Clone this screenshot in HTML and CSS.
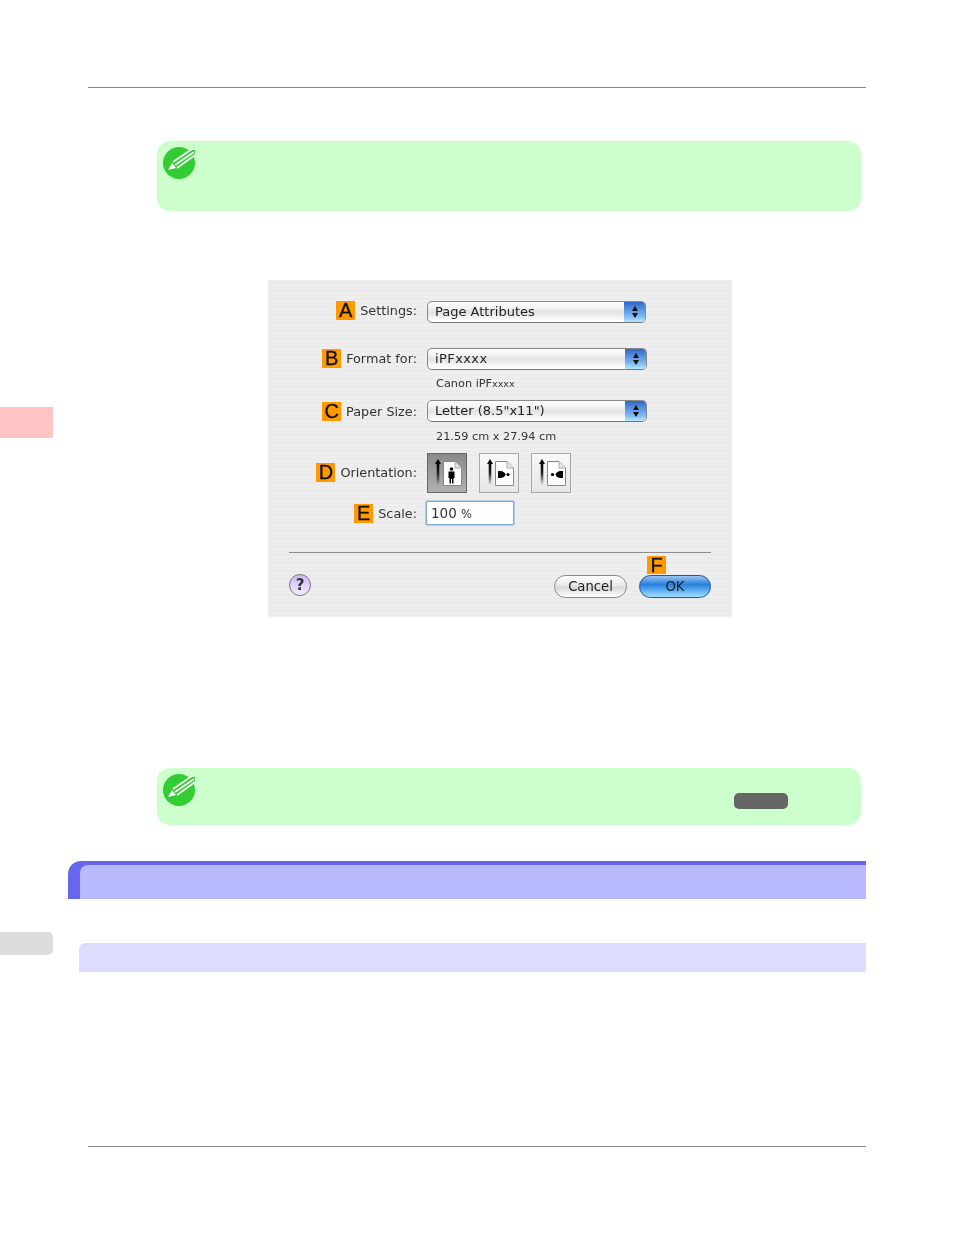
FILE: index.html
```html
<!DOCTYPE html>
<html>
<head>
<title>Page Attributes</title>
<link rel="stylesheet" href="styles.css">
</head>
<body>

<svg class="defs" width="0" height="0">
  <defs>
    <linearGradient id="arrowFade" x1="0" y1="0" x2="0" y2="1">
      <stop offset="0" stop-color="#000"/>
      <stop offset="0.45" stop-color="#222"/>
      <stop offset="1" stop-color="#000" stop-opacity="0"/>
    </linearGradient>
    <g id="sheet">
      <path d="M7 10 L10 5 L13 10 Z" fill="#000"/>
      <rect x="8.7" y="9" width="2.6" height="22" fill="url(#arrowFade)"/>
      <path d="M15.5 7.5 H27 L33.5 14 V31.5 H15.5 Z" fill="#fff" stroke="#888"/>
      <path d="M27 7.5 V14 H33.5" fill="#e4e4e4" stroke="#aaa"/>
    </g>
    <g id="pencil">
      <circle cx="17" cy="18" r="16" fill="#33cc33"/>
      <path d="M4 25 L9 17 L27 5 L33 5 L33 10 L13 25 Z" fill="#33cc33"/>
      <path d="M6 25 L10 18 L14 23 Z" fill="#fff"/>
      <path d="M11 17 L30 4 M13 20 L32 7 M15 23 L33 10" stroke="#fff" stroke-width="1.6" fill="none"/>
    </g>
  </defs>
</svg>

<div class="page">
  <div class="side">
    <div class="tab tab-pink"></div>
    <div class="tab tab-grey"></div>
  </div>

  <div class="main">
    <div class="rule"></div>

    <div class="note note-first">
      <svg class="note-icon" width="36" height="36" viewBox="0 0 36 36"><use href="#pencil"/></svg>
    </div>

    <div class="dialog">
      <div class="row row-settings">
        <div class="label"><span class="badge">A</span>Settings:</div>
        <div class="select select-short">
          <span class="select-text">Page Attributes</span>
          <span class="stepper"><i class="up"></i><i class="down"></i></span>
        </div>
      </div>
      <div class="row row-format">
        <div class="label"><span class="badge">B</span>Format for:</div>
        <div class="select">
          <span class="select-text select-spaced">iPFxxxx</span>
          <span class="stepper"><i class="up"></i><i class="down"></i></span>
        </div>
      </div>
      <div class="sub sub-canon">Canon iPF<span class="tiny">xxxx</span></div>
      <div class="row row-paper">
        <div class="label"><span class="badge">C</span>Paper Size:</div>
        <div class="select">
          <span class="select-text">Letter (8.5"x11")</span>
          <span class="stepper"><i class="up"></i><i class="down"></i></span>
        </div>
      </div>
      <div class="sub sub-size">21.59 cm x 27.94 cm</div>
      <div class="row row-orient">
        <div class="label"><span class="badge">D</span>Orientation:</div>
        <div class="orient">
          <div class="orient-btn active">
            <svg width="38" height="38" viewBox="0 0 38 38">
              <use href="#sheet"/>
              <circle cx="23.5" cy="15" r="1.8" fill="#000"/>
              <path d="M20.5 17.5 H26.5 V24 H25.5 V29.5 H24 V25 H23 V29.5 H21.5 V24 H20.5 Z" fill="#000"/>
            </svg>
          </div>
          <div class="orient-btn">
            <svg width="38" height="38" viewBox="0 0 38 38">
              <use href="#sheet"/>
              <path d="M18 17 H21 Q25 18 25.5 20.5 Q25 23 21 24 H18 Z" fill="#000"/>
              <circle cx="28" cy="20.5" r="1.6" fill="#000"/>
            </svg>
          </div>
          <div class="orient-btn">
            <svg width="38" height="38" viewBox="0 0 38 38">
              <use href="#sheet"/>
              <path d="M31 17 H28 Q24 18 23.5 20.5 Q24 23 28 24 H31 Z" fill="#000"/>
              <circle cx="20.5" cy="20.5" r="1.6" fill="#000"/>
            </svg>
          </div>
        </div>
      </div>
      <div class="row row-scale">
        <div class="label"><span class="badge">E</span>Scale:</div>
        <div class="scale-input">100 <span class="percent">%</span></div>
      </div>
      <div class="divider"></div>
      <div class="footer">
        <div class="help">?</div>
        <div class="buttons">
          <div class="pill cancel">Cancel</div>
          <div class="pill ok"><span class="badge badge-f">F</span>OK</div>
        </div>
      </div>
    </div>

    <div class="note note-second">
      <svg class="note-icon" width="36" height="36" viewBox="0 0 36 36"><use href="#pencil"/></svg>
      <div class="key"></div>
    </div>

    <div class="section"><div class="section-inner"></div></div>
    <div class="subsection"></div>
    <div class="rule rule-bottom"></div>
  </div>
</div>

</body>
</html>
```

FILE: styles.css
```css
body {
  margin: 0;
  background: #fff;
  font-family: "DejaVu Sans", sans-serif;
  color: #222;
}

.defs { display: block; height: 0; }

.page { display: flex; }

/* left margin tabs */
.side { width: 53px; flex: none; }
.tab { width: 53px; }
.tab-pink { margin-top: 407px; height: 31px; background: #ffc4c4; }
.tab-grey {
  margin-top: 494px;
  height: 23px;
  background: #ddd;
  border-radius: 0 5px 5px 0;
}

.main { width: 813px; padding-top: 87px; }

.rule { margin-left: 35px; height: 1px; background: #888; }
.rule-bottom { margin-top: 174px; }

/* green notes */
.note {
  display: flex;
  margin: 0 5px 0 104px;
  padding: 4px 5px;
  box-sizing: border-box;
  background: #ccffcc;
  border-radius: 13px;
}
.note-first { margin-top: 53px; height: 70px; }
.note-second { margin-top: 151px; height: 57px; }
.note-icon { flex: none; }
.key {
  margin: 21px 68px 0 auto;
  width: 54px;
  height: 16px;
  background: #666;
  border-radius: 5px;
}

/* dialog picture */
.dialog {
  margin: 69px 0 0 215px;
  width: 464px;
  height: 337px;
  box-sizing: border-box;
  padding-top: 21px;
  background: repeating-linear-gradient(#eeeeee 0, #eeeeee 2px, #ebebeb 2px, #ebebeb 4px);
  font-size: 12.8px;
  filter: blur(0.35px);
}

.row { display: flex; align-items: center; }
.row-format { margin-top: 25px; }
.row-paper { margin-top: 9px; }
.row-orient { margin-top: 9px; }
.row-scale { margin-top: 8px; }

.label {
  width: 149px;
  margin-right: 10px;
  display: flex;
  justify-content: flex-end;
  align-items: center;
  gap: 5px;
  color: #333;
}
.row-settings .label { margin-top: -3px; }
.row-format .label,
.row-orient .label { margin-top: -1px; }

.badge {
  width: 19px;
  height: 19px;
  background: #ff9900;
  color: #111;
  font: 20px/19px "Liberation Sans", sans-serif;
  text-align: center;
  -webkit-text-stroke: 0.3px #111;
}

.select {
  width: 220px;
  height: 22px;
  box-sizing: border-box;
  display: flex;
  justify-content: space-between;
  border: 1px solid #8a8a8a;
  border-bottom-color: #777;
  border-radius: 5px;
  background: linear-gradient(#fff 0, #f2f2f2 30%, #e2e2e2 50%, #fff 95%);
  overflow: hidden;
}
.select-short { width: 219px; }
.select-text { padding-left: 7px; line-height: 20px; font-size: 13px; color: #222; }
.select-spaced { letter-spacing: 0.4px; }
.stepper {
  width: 21px;
  display: flex;
  flex-direction: column;
  align-items: center;
  justify-content: center;
  gap: 2px;
  background: linear-gradient(#2f66c8 0, #5f95e0 40%, #7ab8f0 70%, #b6e6ff 100%);
}
.stepper i { width: 0; height: 0; border-left: 3px solid transparent; border-right: 3px solid transparent; }
.stepper .up { border-bottom: 5px solid #111; }
.stepper .down { border-top: 5px solid #111; }

.sub { margin-left: 168px; height: 14px; line-height: 14px; font-size: 11.3px; color: #333; }
.tiny { font-size: 9.5px; }
.sub-canon { margin-top: 7px; }
.sub-size { margin-top: 8px; }

.orient { display: flex; gap: 12px; }
.orient-btn {
  width: 40px;
  height: 40px;
  box-sizing: border-box;
  border: 1px solid #a8a8a8;
  background: linear-gradient(#f8f8f8, #e6e6e6);
}
.orient-btn svg { display: block; }
.orient-btn.active {
  border-color: #666;
  background: linear-gradient(#8a8a8a, #b0b0b0);
}

.scale-input {
  width: 86px;
  height: 22px;
  margin: 1px 0;
  padding-left: 4px;
  box-sizing: border-box;
  line-height: 22px;
  background: #fff;
  border-radius: 1px;
  box-shadow: 0 0 0 1px #7fa9d6, 0 0 0 2px #b4cde8;
  font-size: 13.5px;
  color: #333;
}
.percent { font-size: 11.5px; }

.divider { margin: 27px 21px 0; height: 1px; background: #8c8c8c; }

.footer {
  margin: 21px 21px 0;
  display: flex;
  justify-content: space-between;
}
.help {
  width: 22px;
  height: 22px;
  box-sizing: border-box;
  border: 1px solid #777;
  border-radius: 50%;
  background: linear-gradient(#cdb9f5, #f3ecff);
  font: bold 15px/20px "DejaVu Sans", sans-serif;
  text-align: center;
  color: #333;
}
.buttons { display: flex; gap: 12px; padding-top: 1px; }
.pill {
  position: relative;
  width: 72px;
  height: 23px;
  box-sizing: border-box;
  border-radius: 12px;
  text-align: center;
  line-height: 21px;
  font-size: 13.2px;
  color: #222;
}
.cancel {
  width: 73px;
  border: 1px solid #8a8a8a;
  background: linear-gradient(#fff 0, #e8e8e8 45%, #d8d8d8 55%, #fff 100%);
}
.ok {
  border: 1px solid #2b4fa8;
  background: linear-gradient(#9cc6f0 0, #2a7fdc 40%, #4aa0ee 60%, #a6e0ff 100%);
}
.badge-f {
  position: absolute;
  left: 7px;
  top: -20px;
  height: 18px;
  line-height: 18px;
}

/* section headers */
.section {
  margin: 36px 0 0 15px;
  height: 38px;
  box-sizing: border-box;
  padding: 4px 0 0 12px;
  background: #6666ee;
  border-radius: 13px 0 0 0;
}
.section-inner {
  height: 34px;
  background: #b9b9ff;
  border-radius: 8px 0 0 0;
}
.subsection {
  margin: 44px 0 0 26px;
  height: 29px;
  background: #ddddff;
  border-radius: 6px 0 0 0;
}
```
